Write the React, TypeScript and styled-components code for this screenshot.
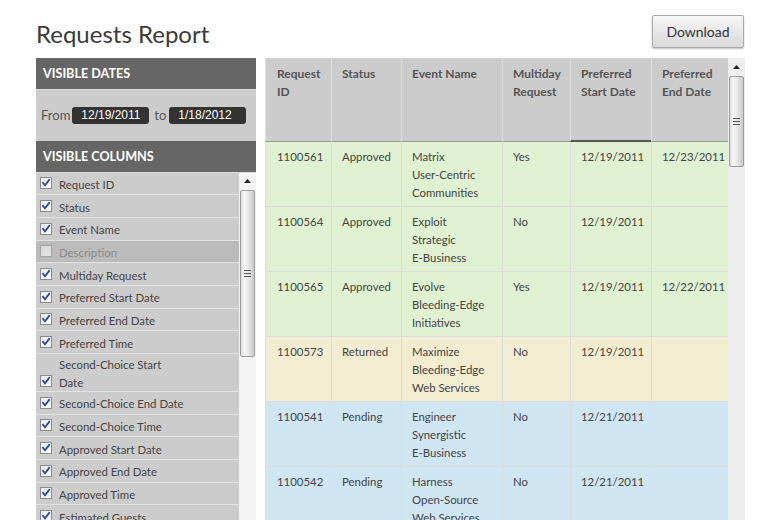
import React from 'react';
import styled, { createGlobalStyle } from 'styled-components';

const GlobalStyle = createGlobalStyle`
  html, body { margin: 0; padding: 0; background: #fff; overflow: hidden; }
  *, *::before, *::after { box-sizing: border-box; }
  body { font-family: Lato, "Open Sans", Arial, sans-serif; color: #444; }
`;

const Page = styled.div`
  width: 780px;
  height: 520px;
  padding: 15px 35px 0 36px;
  display: flex;
  flex-direction: column;
`;

const TopBar = styled.header`
  height: 43px;
  display: flex;
  justify-content: space-between;
  align-items: flex-start;
`;

const Title = styled.h1`
  margin: 0;
  padding-top: 4px;
  font-size: 24px;
  font-weight: 400;
  line-height: 30px;
  color: #3b3b3b;
`;

const DownloadButton = styled.button`
  width: 92px;
  height: 33px;
  margin-right: 1px;
  padding: 0;
  border: 1px solid #a9a9a9;
  border-radius: 2px;
  background: linear-gradient(#f6f6f6, #d9d9d9);
  box-shadow: 0 1px 2px rgba(0, 0, 0, 0.25);
  font: 14px Lato, Arial, sans-serif;
  color: #333;
`;

const Main = styled.main`
  display: flex;
  gap: 9px;
  height: 462px;
  overflow: hidden;
`;

const Sidebar = styled.aside`
  width: 220px;
  display: flex;
  flex-direction: column;
`;

const SectionHeader = styled.div`
  height: 32px;
  flex-shrink: 0;
  background: #666;
  border-bottom: 1px solid #dcdcdc;
  color: #fff;
  font-weight: 700;
  font-size: 12.6px;
  padding-left: 7px;
  display: flex;
  align-items: center;
`;

const DatesBody = styled.div`
  height: 50.67px;
  flex-shrink: 0;
  background: #ccc;
  display: flex;
  align-items: center;
  padding-left: 5px;
  font-size: 13px;
  color: #555;
`;

const DateLabel = styled.span<{ $gapLeft: number; $gapRight: number }>`
  margin: 0 ${(p) => p.$gapRight}px 0 ${(p) => p.$gapLeft}px;
`;

const DateChip = styled.span`
  width: 77px;
  height: 17px;
  padding-left: 9px;
  background: #333;
  color: #fff;
  border-radius: 3px;
  font: 12px "Liberation Sans", Arial, sans-serif;
  line-height: 17px;
`;

const ColumnsArea = styled.div`
  flex: 1;
  min-height: 0;
  display: flex;
`;

const ColumnList = styled.div`
  width: 203px;
  overflow: hidden;
`;

const ColumnRow = styled.div<{ $tall?: boolean; $off?: boolean }>`
  height: ${(p) => (p.$tall ? '38px' : '22.67px')};
  border-bottom: 1px solid #e2e2e2;
  background: ${(p) => (p.$off ? '#bbb' : '#ccc')};
  color: ${(p) => (p.$off ? '#8a8a8a' : '#444')};
  display: flex;
  align-items: center;
  gap: 7px;
  padding-left: 4px;
  font-size: 11.4px;
  line-height: 18px;
`;

const ColumnLabel = styled.span`
  padding-top: 3px;
`;

const BoxWrap = styled.span<{ $tall?: boolean }>`
  display: flex;
  width: 12px;
  height: 12px;
  flex-shrink: 0;
  align-self: ${(p) => (p.$tall ? 'flex-end' : 'center')};
  margin-bottom: ${(p) => (p.$tall ? '4px' : '0')};
`;

const Track = styled.div<{ $bg: string }>`
  width: 17px;
  flex-shrink: 0;
  background: ${(p) => p.$bg};
  display: flex;
  flex-direction: column;
  align-items: center;
`;

const ArrowBox = styled.div`
  height: 17.5px;
  width: 100%;
  display: flex;
  align-items: center;
  justify-content: center;
`;

const Thumb = styled.div<{ $h: number }>`
  width: 15px;
  height: ${(p) => p.$h}px;
  flex-shrink: 0;
  border: 1px solid #9c9c9c;
  border-radius: 2px;
  background: linear-gradient(90deg, #dcdcdc 0%, #f6f6f6 25%, #e4e4e4 60%, #c9c9c9 100%);
  display: flex;
  align-items: center;
  justify-content: center;
`;

const Grip = styled.span`
  width: 7px;
  height: 7px;
  background: repeating-linear-gradient(#555 0 1px, transparent 1px 3px);
`;

const TablePanel = styled.section`
  flex: 1;
  display: flex;
  min-width: 0;
`;

const Viewport = styled.div`
  width: 463px;
  overflow: hidden;
  border-top: 1px solid #d3d3d3;
`;

const Table = styled.table`
  border-collapse: separate;
  border-spacing: 0;
  table-layout: fixed;
  width: 463px;
  font-size: 11.4px;
`;

const HeadCell = styled.th<{ $w: number; $sorted?: boolean }>`
  width: ${(p) => p.$w}px;
  height: 83px;
  background: #ccc;
  color: #555;
  font-weight: 700;
  font-size: 12px;
  text-align: left;
  vertical-align: top;
  padding: 6px 6px 0 10px;
  line-height: 18px;
  border-left: 1px solid #dedede;
  border-bottom: ${(p) => (p.$sorted ? '2px solid #555' : '1px solid #9a9a9a')};
  &:first-child {
    padding-left: 11px;
  }
`;

const toneColors: Record<string, string> = {
  approved: '#dff1d0',
  returned: '#f2ecd0',
  pending: '#cfe5f1',
};

const BodyRow = styled.tr<{ $tone: string }>`
  background: ${(p) => toneColors[p.$tone]};
`;

const BodyCell = styled.td`
  height: 65px;
  vertical-align: top;
  padding: 6px 4px 4px 10px;
  line-height: 18px;
  color: #444;
  border-left: 1px solid #dcdcdc;
  border-bottom: 1px solid #dcdcdc;
  &:first-child {
    padding-left: 11px;
  }
`;

const Line = styled.span`
  display: block;
  white-space: nowrap;
`;

const Checkbox: React.FC<{ checked: boolean; tall?: boolean }> = ({ checked, tall }) => (
  <BoxWrap $tall={tall}>
    <svg width="12" height="12" viewBox="0 0 12 12">
      <defs>
        <linearGradient id={checked ? 'cbOn' : 'cbOff'} x1="0" y1="0" x2="1" y2="1">
          <stop offset="0" stopColor={checked ? '#e8e8e8' : '#d4d4d4'} />
          <stop offset="1" stopColor={checked ? '#ffffff' : '#e6e6e6'} />
        </linearGradient>
      </defs>
      <rect x="0.5" y="0.5" width="11" height="11" fill={`url(#${checked ? 'cbOn' : 'cbOff'})`} stroke={checked ? '#8a8a8a' : '#a4a4a4'} />
      {checked && (
        <path d="M3 5.8 L5 8.3 L9.2 2.8" fill="none" stroke="#2a43a8" strokeWidth="1.7" strokeLinecap="square" />
      )}
    </svg>
  </BoxWrap>
);

const Scrollbar: React.FC<{ bg: string; thumb: number }> = ({ bg, thumb }) => (
  <Track $bg={bg}>
    <ArrowBox>
      <svg width="7" height="4" viewBox="0 0 7 4">
        <polygon points="0,4 3.5,0 7,4" fill="#222" />
      </svg>
    </ArrowBox>
    <Thumb $h={thumb}>
      <Grip />
    </Thumb>
  </Track>
);

const columns: { label: React.ReactNode; checked: boolean; tall?: boolean }[] = [
  { label: 'Request ID', checked: true },
  { label: 'Status', checked: true },
  { label: 'Event Name', checked: true },
  { label: 'Description', checked: false },
  { label: 'Multiday Request', checked: true },
  { label: 'Preferred Start Date', checked: true },
  { label: 'Preferred End Date', checked: true },
  { label: 'Preferred Time', checked: true },
  { label: (<><Line>Second-Choice Start</Line><Line>Date</Line></>), checked: true, tall: true },
  { label: 'Second-Choice End Date', checked: true },
  { label: 'Second-Choice Time', checked: true },
  { label: 'Approved Start Date', checked: true },
  { label: 'Approved End Date', checked: true },
  { label: 'Approved Time', checked: true },
  { label: 'Estimated Guests', checked: true },
  { label: 'Location', checked: true },
];

const headers: { lines: string[]; w: number; sorted?: boolean }[] = [
  { lines: ['Request', 'ID'], w: 66 },
  { lines: ['Status'], w: 70 },
  { lines: ['Event Name'], w: 101 },
  { lines: ['Multiday', 'Request'], w: 68 },
  { lines: ['Preferred', 'Start Date'], w: 81, sorted: true },
  { lines: ['Preferred', 'End Date'], w: 77 },
];

const rows = [
  { id: '1100561', status: 'Approved', name: ['Matrix', 'User-Centric', 'Communities'], multi: 'Yes', start: '12/19/2011', end: '12/23/2011', tone: 'approved' },
  { id: '1100564', status: 'Approved', name: ['Exploit', 'Strategic', 'E-Business'], multi: 'No', start: '12/19/2011', end: '', tone: 'approved' },
  { id: '1100565', status: 'Approved', name: ['Evolve', 'Bleeding-Edge', 'Initiatives'], multi: 'Yes', start: '12/19/2011', end: '12/22/2011', tone: 'approved' },
  { id: '1100573', status: 'Returned', name: ['Maximize', 'Bleeding-Edge', 'Web Services'], multi: 'No', start: '12/19/2011', end: '', tone: 'returned' },
  { id: '1100541', status: 'Pending', name: ['Engineer', 'Synergistic', 'E-Business'], multi: 'No', start: '12/21/2011', end: '', tone: 'pending' },
  { id: '1100542', status: 'Pending', name: ['Harness', 'Open-Source', 'Web Services'], multi: 'No', start: '12/21/2011', end: '', tone: 'pending' },
];

export default function App() {
  return (
    <>
      <GlobalStyle />
      <Page>
        <TopBar>
          <Title>Requests Report</Title>
          <DownloadButton>Download</DownloadButton>
        </TopBar>
        <Main>
          <Sidebar>
            <SectionHeader>VISIBLE DATES</SectionHeader>
            <DatesBody>
              <DateLabel $gapLeft={0} $gapRight={2}>From</DateLabel>
              <DateChip>12/19/2011</DateChip>
              <DateLabel $gapLeft={5} $gapRight={3}>to</DateLabel>
              <DateChip>1/18/2012</DateChip>
            </DatesBody>
            <SectionHeader>VISIBLE COLUMNS</SectionHeader>
            <ColumnsArea>
              <ColumnList>
                {columns.map((c, i) => (
                  <ColumnRow key={i} $tall={c.tall} $off={!c.checked}>
                    <Checkbox checked={c.checked} tall={c.tall} />
                    <ColumnLabel>{c.label}</ColumnLabel>
                  </ColumnRow>
                ))}
              </ColumnList>
              <Scrollbar bg="#f3f3f3" thumb={167} />
            </ColumnsArea>
          </Sidebar>
          <TablePanel>
            <Viewport>
              <Table>
                <thead>
                  <tr>
                    {headers.map((h, i) => (
                      <HeadCell key={i} $w={h.w} $sorted={h.sorted}>
                        {h.lines.map((l) => (
                          <Line key={l}>{l}</Line>
                        ))}
                      </HeadCell>
                    ))}
                  </tr>
                </thead>
                <tbody>
                  {rows.map((r) => (
                    <BodyRow key={r.id} $tone={r.tone}>
                      <BodyCell>{r.id}</BodyCell>
                      <BodyCell>{r.status}</BodyCell>
                      <BodyCell>
                        {r.name.map((n) => (
                          <Line key={n}>{n}</Line>
                        ))}
                      </BodyCell>
                      <BodyCell>{r.multi}</BodyCell>
                      <BodyCell>{r.start}</BodyCell>
                      <BodyCell>{r.end}</BodyCell>
                    </BodyRow>
                  ))}
                </tbody>
              </Table>
            </Viewport>
            <Scrollbar bg="#eeeeee" thumb={91} />
          </TablePanel>
        </Main>
      </Page>
    </>
  );
}
